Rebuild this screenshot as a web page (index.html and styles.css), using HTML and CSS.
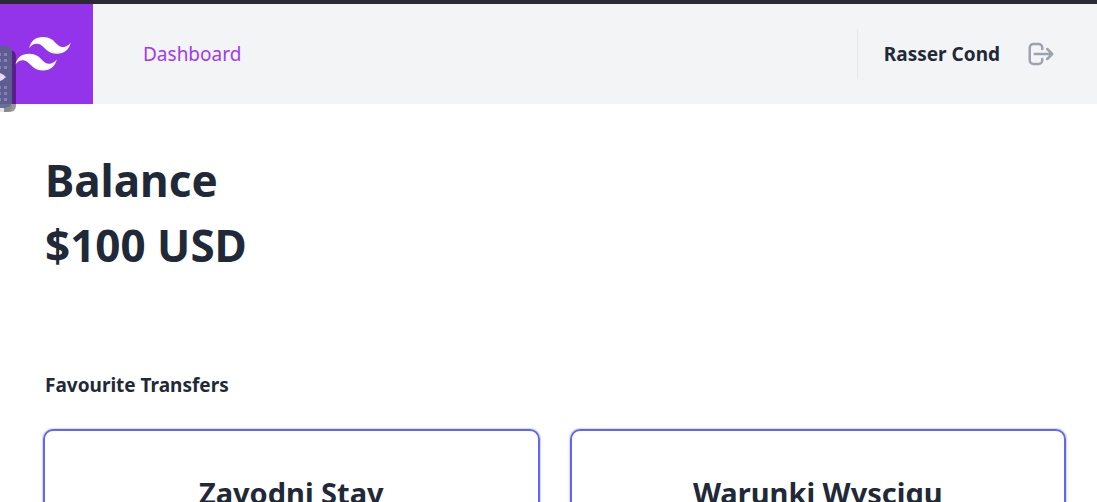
FILE: index.html
```html
<!DOCTYPE html>
<html lang="en">
<head>
    <meta charset="UTF-8">
    <meta name="viewport" content="width=device-width, initial-scale=1.0">
    <title>Dashboard</title>
    <link rel="stylesheet" href="styles.css">
</head>
<body>
    <header class="header">
        <a class="logo" href="#" aria-label="Home">
            <svg width="56" height="34" viewBox="0 0 54 33" fill="currentColor">
                <path d="M27 0c-7.2 0-11.7 3.6-13.5 10.8 2.7-3.6 5.85-4.95 9.45-4.05 2.054.513 3.522 2.004 5.147 3.653C30.744 13.09 33.808 16.2 40.5 16.2c7.2 0 11.7-3.6 13.5-10.8-2.7 3.6-5.85 4.95-9.45 4.05-2.054-.513-3.522-2.004-5.147-3.653C36.756 3.11 33.692 0 27 0zM13.5 16.2C6.3 16.2 1.8 19.8 0 27c2.7-3.6 5.85-4.95 9.45-4.05 2.054.514 3.522 2.004 5.147 3.653C17.244 29.29 20.308 32.4 27 32.4c7.2 0 11.7-3.6 13.5-10.8-2.7 3.6-5.85 4.95-9.45 4.05-2.054-.513-3.522-2.004-5.147-3.653C23.256 19.31 20.192 16.2 13.5 16.2z"/>
            </svg>
        </a>
        <nav class="nav">
            <a class="nav-link" href="#">Dashboard</a>
        </nav>
        <div class="user">
            <span class="user-name">Rasser Cond</span>
            <button class="logout-button" type="button" aria-label="Log out">
                <svg width="30" height="30" viewBox="0 0 24 24" fill="none" stroke="currentColor" stroke-width="2" stroke-linecap="round" stroke-linejoin="round">
                    <path d="M17 16l4-4m0 0l-4-4m4 4H7m6 4v1a3 3 0 01-3 3H6a3 3 0 01-3-3V7a3 3 0 013-3h4a3 3 0 013 3v1"/>
                </svg>
            </button>
        </div>
    </header>

    <main class="main">
        <h1 class="balance">Balance<br>$100 USD</h1>
        <h2 class="section-title">Favourite Transfers</h2>
        <div class="transfers">
            <a class="transfer" href="#">Zavodni Stav</a>
            <a class="transfer" href="#">Warunki Wyscigu</a>
        </div>
    </main>

    <!-- Drawer handle on the left edge -->
    <button class="drawer-handle" type="button" aria-label="Open drawer">
        <svg width="12" height="62" viewBox="0 0 12 62">
            <g fill="#8581b4">
                <path d="M0 7h1v3H0zM4 7h3v3H4zM0 13h1v3H0zM4 13h3v3H4zM0 20h1v3H0zM4 20h3v3H4z"/>
                <path d="M0 40h1v3H0zM4 40h3v3H4zM0 46h1v3H0zM4 46h3v3H4zM0 52h1v3H0zM4 52h3v3H4z"/>
            </g>
            <path fill="#e9d8fb" d="M0 27q3 1 6 4q-3 3-6 4z"/>
        </svg>
    </button>
</body>
</html>
```

FILE: styles.css
```css
* {
    box-sizing: border-box;
}

body {
    margin: 0;
    border-top: 4px solid #2b2932;
    font-family: "Noto Sans", "Open Sans", sans-serif;
    font-size: 19px;
    line-height: 28px;
    color: #1f2937;
    background-color: #fff;
}

a {
    color: inherit;
    text-decoration: none;
}

button {
    padding: 0;
    border: none;
    background: none;
    cursor: pointer;
}

svg {
    display: block;
}

.header {
    display: flex;
    align-items: center;
    height: 100px;
    padding-right: 41px;
    background-color: #f3f4f6;
}

.logo {
    display: flex;
    align-items: center;
    justify-content: flex-end;
    width: 93px;
    height: 100%;
    padding-right: 22px;
    color: #fff;
    background-color: #9333ea;
}

.nav {
    flex: 1;
    padding-left: 50px;
}

.nav-link {
    color: #9f3bef;
}

.user {
    display: flex;
    align-items: center;
    gap: 26px;
    height: 50px;
    padding-left: 26px;
    border-left: 1px solid #e5e7eb;
}

.user-name {
    font-weight: 700;
}

.logout-button {
    color: #9ca3af;
}

.main {
    padding: 44px 31px 40px 43px;
}

.balance {
    margin: 0 2px;
    font-size: 44px;
    line-height: 65px;
    font-weight: 700;
}

.section-title {
    margin: 93px 2px 30px;
    font-size: 19px;
    line-height: 28px;
    font-weight: 700;
}

.transfers {
    display: grid;
    grid-template-columns: 1fr 1fr;
    gap: 30px;
}

.transfer {
    padding: 42px 24px;
    border: 2px solid #6366f1;
    border-radius: 10px;
    font-size: 29px;
    line-height: 40px;
    font-weight: 700;
    text-align: center;
    box-shadow: 0 0 0 1px rgba(99, 102, 241, 0.2), 0 1px 5px rgba(0, 0, 0, 0.08);
}

.drawer-handle {
    position: absolute;
    top: 46px;
    left: 0;
    border-radius: 0 6px 6px 0;
    background-color: rgba(88, 98, 134, 0.9);
    box-shadow: 4px 4px 0 rgba(0, 0, 0, 0.4), 0 4px 0 rgba(0, 0, 0, 0.1);
}
```
